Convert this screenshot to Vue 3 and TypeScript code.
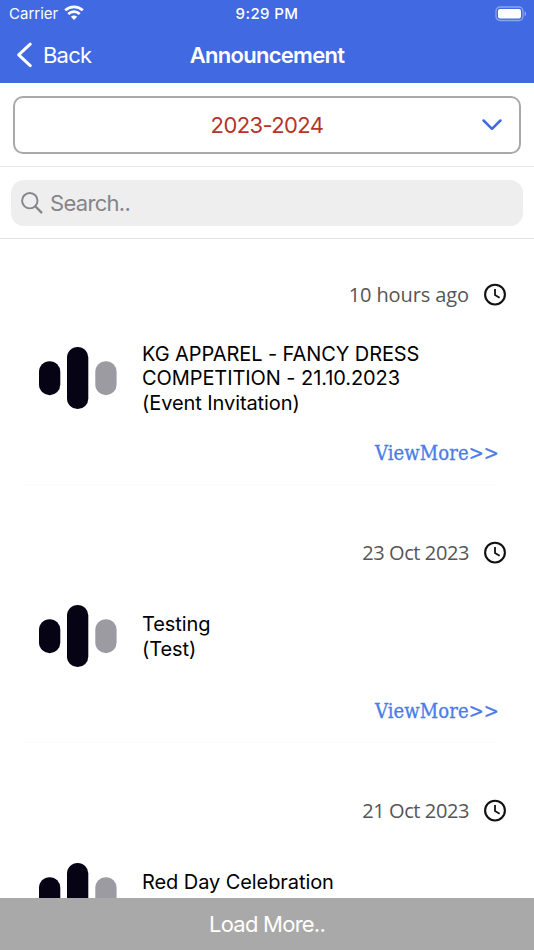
<script setup lang="ts">
interface Announcement {
  id: number
  date: string
  lines: string[]
}

const announcements: Announcement[] = [
  {
    id: 1,
    date: '10 hours ago',
    lines: ['KG APPAREL - FANCY DRESS', 'COMPETITION - 21.10.2023', '(Event Invitation)'],
  },
  { id: 2, date: '23 Oct 2023', lines: ['Testing', '(Test)'] },
  { id: 3, date: '21 Oct 2023', lines: ['Red Day Celebration', '(Event Celebration)'] },
]
</script>

<template>
  <div class="screen">
    <header class="header">
      <div class="status">
        <div class="carrier">
          <span>Carrier</span>
          <svg class="wifi" width="20" height="15" viewBox="0 0 20 15" fill="none" stroke="#fff" stroke-width="2.7">
            <path d="M1.2 5.3C6.2.7 13.8.7 18.8 5.3" />
            <path d="M4.3 8.9C7.5 5.9 12.5 5.9 15.7 8.9" />
            <path d="M10 15L6.9 11.8C8.7 10.1 11.3 10.1 13.1 11.8Z" fill="#fff" stroke="none" />
          </svg>
        </div>
        <span class="time">9:29 PM</span>
        <svg class="battery" width="32" height="16" viewBox="0 0 32 16">
          <rect x="1" y="1" width="27" height="13.5" rx="4" fill="none" stroke="#fff" stroke-opacity=".4" stroke-width="1.3" />
          <rect x="3" y="3" width="23" height="9.5" rx="2" fill="#fff" />
          <path d="M29.7 5.2C31.4 6 31.4 9.4 29.7 10.2Z" fill="#fff" fill-opacity=".5" />
        </svg>
      </div>
      <nav class="nav">
        <button class="back" type="button">
          <svg width="16" height="26" viewBox="0 0 16 26" fill="none" stroke="#fff" stroke-width="3" stroke-linecap="round" stroke-linejoin="round">
            <path d="M14.2 2.2L2.7 12.8L14.2 23.6" />
          </svg>
          <span>Back</span>
        </button>
        <h1 class="title">Announcement</h1>
        <span></span>
      </nav>
    </header>

    <div class="year-panel">
      <div class="select">
        <span></span>
        <span class="year">2023-2024</span>
        <svg class="chevron" width="20" height="12" viewBox="0 0 20 12" fill="none" stroke="#4169e1" stroke-width="2.5" stroke-linecap="round" stroke-linejoin="round">
          <path d="M1.6 1.5L10 9.8L18.4 1.5" />
        </svg>
      </div>
    </div>

    <div class="search-panel">
      <div class="search">
        <svg width="22" height="22" viewBox="0 0 22 22" fill="none" stroke="#85858a" stroke-linecap="round">
          <circle cx="8.8" cy="8.7" r="7.7" stroke-width="1.9" />
          <path d="M14.5 14.5L20.3 20.3" stroke-width="2.4" />
        </svg>
        <span>Search..</span>
      </div>
    </div>

    <main class="list">
      <article v-for="item in announcements" :key="item.id" class="item">
        <div class="meta">
          <span class="date" :class="{ relative: item.date.endsWith('ago') }">{{ item.date }}</span>
          <svg width="24" height="24" viewBox="0 0 24 24" fill="none" stroke="#111">
            <circle cx="12" cy="11.6" r="9.9" stroke-width="2.1" />
            <path d="M12 6.1V11.9L16.6 14.7" stroke-width="1.8" />
          </svg>
        </div>
        <div class="body">
          <svg class="logo" width="78" height="63" viewBox="0 0 78 63">
            <rect x="0" y="14.2" width="21.3" height="34" rx="10.6" fill="#050314" />
            <rect x="28" y="0" width="21.3" height="62" rx="10.6" fill="#050314" />
            <rect x="56.3" y="14.2" width="21.3" height="34" rx="10.6" fill="#9d9ba2" />
          </svg>
          <div class="text">
            <div v-for="line in item.lines" :key="line">{{ line }}</div>
          </div>
        </div>
        <a class="more">ViewMore&gt;&gt;</a>
      </article>
    </main>

    <button class="load" type="button">Load More..</button>
  </div>
</template>

<style>
body {
  margin: 0;
  background: #fff;
}
</style>

<style scoped>
.screen {
  width: 534px;
  height: 950px;
  display: flex;
  flex-direction: column;
  overflow: hidden;
  background: #fff;
  color: #000;
  font-family: Inter, "Liberation Sans", sans-serif;
}
button {
  border: 0;
  padding: 0;
  background: none;
  color: inherit;
  font: inherit;
}
.header {
  flex: none;
  height: 83px;
  background: #4169e1;
  color: #fff;
}
.status {
  height: 27px;
  display: grid;
  grid-template-columns: 1fr auto 1fr;
  align-items: center;
  padding: 0 9px 0 9px;
  font-size: 15px;
}
.carrier {
  display: flex;
  align-items: center;
  gap: 6px;
}
.wifi {
  margin-top: -2px;
}
.time {
  font-weight: 500;
  letter-spacing: 0.4px;
}
.battery {
  justify-self: end;
  margin-right: -2px;
}
.nav {
  height: 55px;
  display: grid;
  grid-template-columns: 1fr auto 1fr;
  align-items: center;
  padding: 0 16px;
}
.back {
  display: flex;
  align-items: center;
  gap: 11px;
  font-size: 22px;
  letter-spacing: -0.8px;
}
.title {
  margin: 0;
  font-size: 22px;
  font-weight: 600;
  letter-spacing: -0.7px;
}
.year-panel {
  flex: none;
  padding: 13px 13px 12px;
  border-bottom: 1px solid #e9e9e9;
}
.select {
  box-sizing: border-box;
  height: 58px;
  display: grid;
  grid-template-columns: 1fr auto 1fr;
  align-items: center;
  padding: 0 17px;
  border: 2px solid #a9a9a9;
  border-radius: 10px;
}
.year {
  color: #b5352b;
  font-size: 22px;
  letter-spacing: -0.6px;
}
.chevron {
  justify-self: end;
}
.search-panel {
  flex: none;
  padding: 13px 11px 12px;
  border-bottom: 1px solid #e2e2e2;
}
.search {
  height: 46px;
  display: flex;
  align-items: center;
  gap: 7px;
  padding-left: 10px;
  border-radius: 13px;
  background: #eee;
  color: #85858a;
  font-size: 22px;
  letter-spacing: -0.7px;
}
.list {
  flex: 1;
  min-height: 0;
  overflow: hidden;
  display: flex;
  flex-direction: column;
  gap: 12px;
}
.item {
  flex: none;
  box-sizing: border-box;
  height: 246px;
  display: flex;
  flex-direction: column;
  margin: 0 36px 0 24px;
  padding-top: 43px;
  border-bottom: 1px solid #fafafa;
}
.meta {
  height: 25px;
  display: flex;
  align-items: center;
  justify-content: flex-end;
  gap: 14px;
  margin-right: -9px;
}
.date {
  color: #555;
  font: 20px "Open Sans", "Noto Sans", sans-serif;
  letter-spacing: -0.4px;
}
.date.relative {
  letter-spacing: -0.1px;
}
.body {
  height: 142px;
  display: flex;
  align-items: center;
  gap: 25px;
  padding-left: 15px;
}
.text {
  padding-top: 1px;
  font-size: 20px;
  line-height: 24.5px;
  letter-spacing: -0.08px;
  white-space: nowrap;
}
.more {
  align-self: flex-end;
  color: #4a7be8;
  font: 20px/24px "DejaVu Serif Condensed", "DejaVu Serif", serif;
  letter-spacing: 0.1px;
  -webkit-text-stroke: 0.3px #4a7be8;
  margin: -8px -1px 0 0;
}
.load {
  flex: none;
  height: 52px;
  background: #a9a9a9;
  color: #fff;
  font-size: 22px;
  letter-spacing: -0.75px;
}
</style>
